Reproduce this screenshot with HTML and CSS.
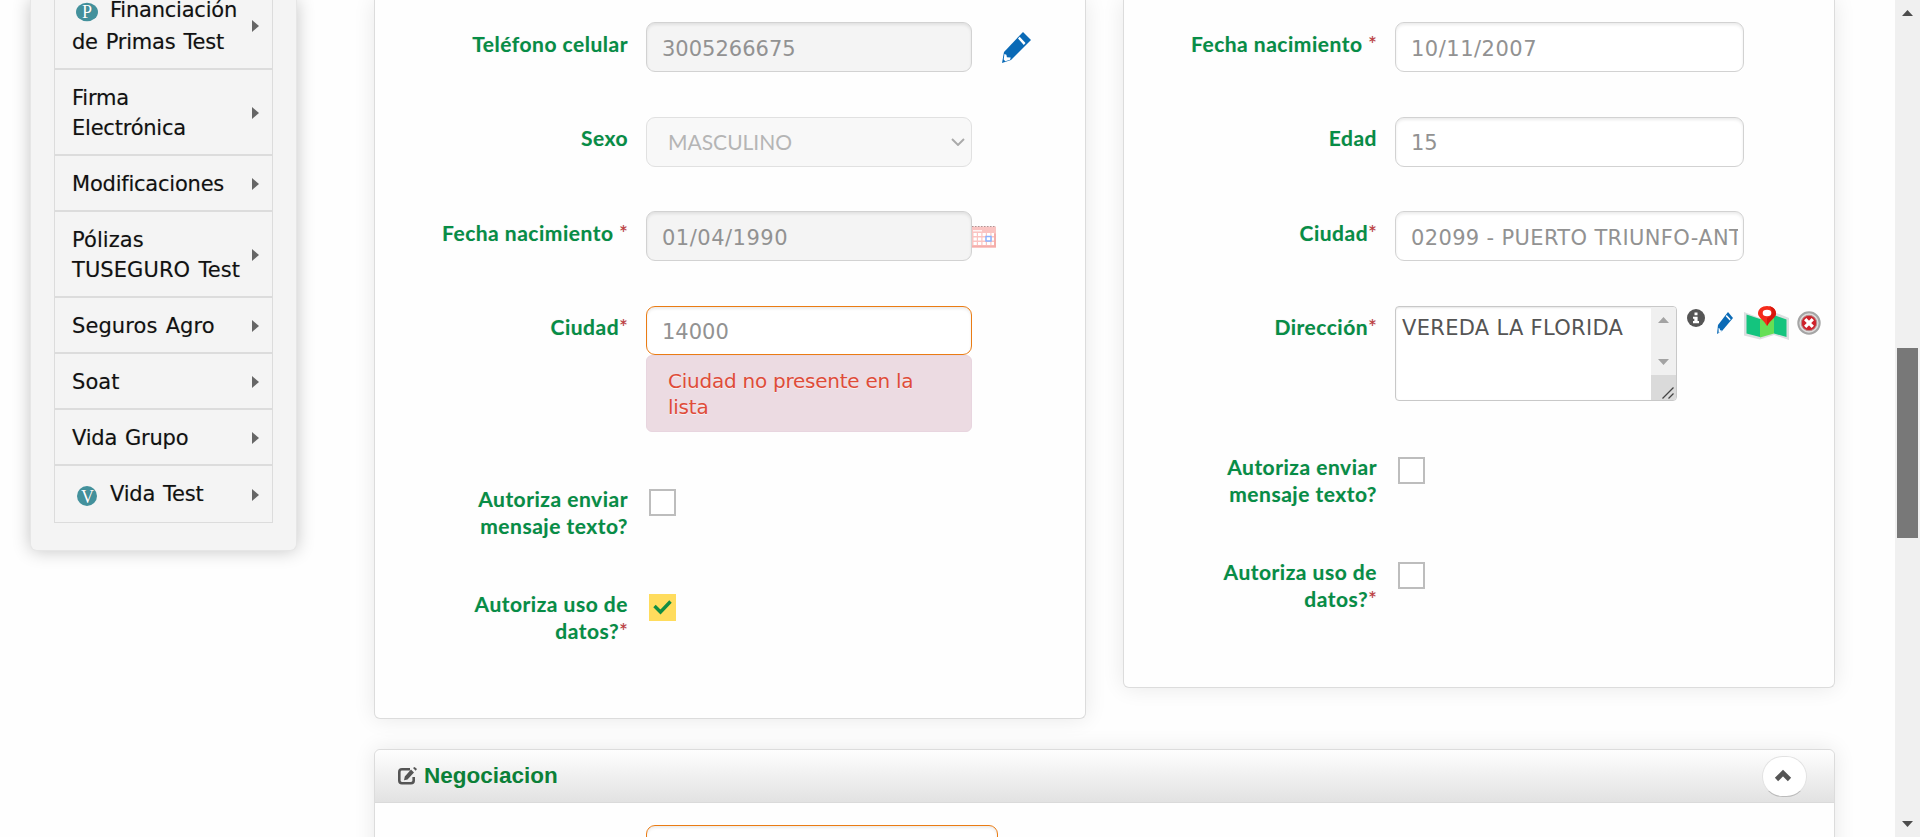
FILE: index.html
```html
<!DOCTYPE html>
<html lang="es">
<head>
<meta charset="utf-8">
<title>Negociacion</title>
<link rel="stylesheet" href="styles.css">
</head>
<body>
<div class="page">
  <nav class="sidebar">
    <ul class="menu">
      <li class="item first"><span><svg class="badge" viewBox="0 0 22 19"><ellipse cx="11" cy="9.5" rx="11" ry="9.3"/><text x="11" y="15.5">P</text></svg>Financiación<br>de Primas Test</span></li>
      <li class="item"><span>Firma<br>Electrónica</span></li>
      <li class="item"><span>Modificaciones</span></li>
      <li class="item loose"><span>Pólizas<br>TUSEGURO Test</span></li>
      <li class="item loose"><span>Seguros Agro</span></li>
      <li class="item loose"><span>Soat</span></li>
      <li class="item"><span>Vida Grupo</span></li>
      <li class="item last"><span><svg class="badge" viewBox="0 0 22 20"><circle cx="11" cy="10" r="10"/><text x="11.5" y="16.5">V</text></svg>Vida Test</span></li>
    </ul>
  </nav>

  <main class="content">
    <div class="columns">
      <section class="panel left">
        <div class="row"><label>Teléfono celular</label><div class="field disabled">3005266675</div>
          <svg class="pencil big" viewBox="0 0 29 31"><path fill="#0a6ab6" d="M21 0 29 8 9 28 0 31 2 20Z"/><path fill="#fff" d="m16 6.500 1.700-1.700 5.800 6.300-1.700 1.800zM2.400 22l2 .7.500 2.500 3.800.3-.6 2.200-4.800 1.500-1.600-1.600z"/></svg></div>
        <div class="row"><label class="raised">Sexo</label><div class="field select">MASCULINO<svg viewBox="0 0 14 8"><path d="M1 1l6 6 6-6"/></svg></div></div>
        <div class="row"><label>Fecha nacimiento <i>*</i></label><div class="field disabled date">01/04/1990</div>
          <svg class="calendar" viewBox="0 0 24 22"><path fill="#fac4c2" d="M0 1h24v21H0z"/><path fill="#f5aeaa" d="M0 20h24v2H0zM22 8h2v14h-2z"/><path stroke="#ad9494" stroke-dasharray="1.500 1.500" d="M0 1h24"/><path fill="#fff" opacity=".8" d="M1 4.500h9v1.500H1z"/><path stroke="#fff" stroke-width="3" stroke-dasharray="3.300 1.200" d="M1.500 9H22M1.500 13.500H22M1.500 18H22"/><path fill="#fff" stroke="#8bb3ff" stroke-width="1.500" d="M14 11h5v4.500h-5z"/></svg></div>
        <div class="row city"><label class="raised">Ciudad<i>*</i></label><div><div class="field invalid">14000</div><div class="error">Ciudad no presente en la lista</div></div></div>
        <div class="row check"><label>Autoriza enviar<br>mensaje texto?</label><span class="box"></span></div>
        <div class="row check"><label>Autoriza uso de<br>datos?<i>*</i></label><span class="box on"><svg viewBox="0 0 27 27"><path d="M5.500 12 11.500 18 21.500 7.500"/></svg></span></div>
      </section>

      <section class="panel right">
        <div class="row"><label>Fecha nacimiento <i>*</i></label><div class="field date">10/11/2007</div></div>
        <div class="row"><label class="raised">Edad</label><div class="field">15</div></div>
        <div class="row"><label>Ciudad<i>*</i></label><div class="field place"><span class="clip">02099 - PUERTO TRIUNFO-ANT</span></div></div>
        <div class="row address"><label class="raised">Dirección<i>*</i></label>
          <div class="textarea"><span>VEREDA LA FLORIDA</span>
            <svg viewBox="0 0 25 93"><path fill="#f0f0f0" d="M0 0h25v68H0z"/><path fill="#dadada" d="M0 68h25v25H0z"/><path fill="#a3a3a3" d="M7 16 12.500 10 18 16zM7 52h11l-5.500 6z"/><path stroke="#444" stroke-width="1.300" d="M11.500 91.500 22.500 80.500M17.500 91.500l5-5"/></svg></div>
          <svg class="info" viewBox="0 0 18 18"><circle cx="9" cy="9" r="9" fill="#555"/><path fill="#fff" d="M7.500 3.500h3v2.800h-3zM6 7.700h4.600V12H12v2.200H6V12h1.300V9.700H6z"/></svg>
          <svg class="pencil small" viewBox="0 0 16 22"><path fill="#0a6ab6" d="M11 0 16 6 5 19 0 22 1 13Z"/><path fill="#fff" d="m8.700 4.200 1-1.300 4 4.300-1 1.300zM1.500 16l1.200.5.400 1.700 1.800.2-.4 1.100-2.800 1.400z"/></svg>
          <svg class="map" viewBox="0 0 45 34"><path fill="#dcdfe0" d="M0 6 16 12 30 6 45 12V34L30 29 16 33.500 0 29.500Z"/><path fill="#14c47e" d="M2.500 8.500 16 13v18L2.500 27.500zM30 9l12.500 4.500V31L30 27.500z"/><path fill="#65df55" d="M16 13 30 9v18.500L16 31.500z"/><path fill="#f52b1b" d="M23 20C20 14 14 11.500 14 7.500 14 3 18 0 23 0s9 3 9 7.500C32 11.500 26 14 23 20Z"/><path fill="#d8170d" d="M25 0c4 .8 7 3.500 7 7.500 0 4-6 6.500-9 12.500v-8c6-1 6-9 2-12z"/><ellipse cx="23" cy="7" rx="4.300" ry="3.300" fill="#fff"/></svg>
          <svg class="remove" viewBox="0 0 24 24"><circle cx="12" cy="12" r="10.700" fill="#dcdcdc" stroke="#a5a5a5" stroke-width="2"/><circle cx="12" cy="12" r="7.700" fill="#cf222b" stroke="#b58d8d"/><path stroke="#fff" stroke-width="3.300" d="m8.200 8.200 7.600 7.600m0-7.600-7.600 7.600"/></svg>
        </div>
        <div class="row check"><label>Autoriza enviar<br>mensaje texto?</label><span class="box"></span></div>
        <div class="row check"><label>Autoriza uso de<br>datos?<i>*</i></label><span class="box"></span></div>
      </section>
    </div>

    <section class="panel deal">
      <header>
        <svg class="edit" viewBox="0 0 19 18"><path fill="none" stroke="#555" stroke-width="2.600" d="M12 2.300H4Q1.300 2.300 1.300 5v8.500q0 2.700 2.700 2.700h9q2.700 0 2.700-2.700V10"/><path fill="#555" d="m13 2.500 3 3-6.500 7L6 13.200l.8-3.700zM15 1l1.500-1L19 2l-1.300 1.800z"/></svg>
        <h2>Negociacion</h2>
        <button><svg viewBox="0 0 18 13"><path d="M2.500 10.500 9 4l6.500 6.500"/></svg></button>
      </header>
      <div class="row"><div class="field invalid wide"></div></div>
    </section>
  </main>

  <div class="scrollbar"><svg viewBox="0 0 11 6"><path d="M0 6 5.500 0 11 6z"/></svg><div class="thumb"></div><svg class="down" viewBox="0 0 11 6"><path d="M0 0h11L5.500 6z"/></svg></div>
</div>
</body>
</html>
```
FILE: styles.css
```css
* { box-sizing: border-box; }
body { margin: 0; background: #fefefe; overflow: hidden; font: 21px/30px "DejaVu Sans", sans-serif; }
svg { display: block; flex: none; }
.page { display: flex; height: 837px; overflow: hidden; }

.sidebar { width: 267px; height: 551px; margin-left: 30px; flex: none; background: #f4f4f4; border: 1px solid #e6e6e6; border-top: 0; border-radius: 0 0 7px 7px; box-shadow: 0 0 18px rgba(0,0,0,.23); padding: 0 22px 0 23px; }
.menu { list-style: none; margin: 0; padding: 0; width: 219px; }
.item { position: relative; display: flex; align-items: center; min-height: 56px; padding: 13px 0 11px 17px; border: 1px solid #dcdcdc; color: #111; letter-spacing: -.22px; word-spacing: 1.5px; white-space: nowrap; text-shadow: 0 0 1px rgba(0,0,0,.25); }
.item::after { content: ""; position: absolute; right: 13px; top: 50%; margin-top: -5px; border: 6px solid transparent; border-left: 7px solid #666; border-right: 0; }
.loose { letter-spacing: .08px; }
.first { height: 69px; padding: 0 0 10px 17px; border-top: 0; line-height: 32px; align-items: flex-end; }
.first::after { top: 25px; margin-top: -5px; }
.last { height: 58px; padding: 12px 0 12px 17px; }
.badge { display: inline-block; width: 22px; height: 20px; margin: 0 12px 0 4px; vertical-align: -5px; fill: #43919c; }
.badge text { font: 18px "Liberation Serif", serif; fill: #fff; text-anchor: middle; }

.content { width: 1461px; margin-left: 77px; flex: none; }
.columns { display: flex; justify-content: space-between; align-items: flex-start; height: 749px; }
.panel { background: #fefefe; border: 1px solid #dcdcdc; border-radius: 6px; box-shadow: 0 0 22px rgba(0,0,0,.09); }
.left, .right { width: 712px; padding-top: 22px; border-top: 0; border-radius: 0 0 6px 6px; }
.left { height: 719px; }
.right { height: 688px; }
.row { display: flex; align-items: flex-start; height: 94.500px; }
label { flex: none; width: 253px; margin-right: 18px; padding-top: 8px; text-align: right; font: bold 21px/27px Lato, sans-serif; letter-spacing: .5px; color: #068d46; text-shadow: 0 0 1px rgba(0,0,0,.2); }
.raised { padding-top: 7px; }
label i { font-style: normal; font-weight: normal; color: #c03a3d; letter-spacing: 0; }
.field { display: flex; align-items: center; width: 326px; height: 50px; padding: 3px 5px 0 15px; border: 1px solid #d2d2d2; border-radius: 9px; background: #fff; box-shadow: inset 0 2px 3px rgba(0,0,0,.08); color: #929292; white-space: nowrap; }
.right .field { width: 349px; }
.date { letter-spacing: .5px; }
.place { letter-spacing: .35px; }
.clip { overflow: hidden; }
.disabled { background: #f4f4f4; }
.select { position: relative; padding: 1px 5px 0 21px; background: #f8f8f8; border-color: #e1e1e1; box-shadow: none; color: #b5b5b5; font-family: Lato, sans-serif; }
.select svg { position: absolute; right: 6px; top: 20px; width: 14px; fill: none; stroke: #aaa; stroke-width: 1.900; }
.invalid { border-color: #ea7c14; }
.big { width: 29px; height: 31px; margin: 10px 0 0 30px; }
.calendar { width: 24px; height: 23px; margin-top: 14px; }
.city { height: 171.500px; }
.city .field { height: 49px; }
.error { width: 326px; height: 77px; padding: 12px 20px 0 21px; background: #ecdbe2; border: 1px solid #e8d5df; border-radius: 6px; color: #df4c39; font-size: 20px; letter-spacing: -.25px; line-height: 26px; text-shadow: 0 1px 0 rgba(255,255,255,.6); }
.address { height: 139.500px; }
.check { height: 105px; }
.box { width: 27px; height: 27px; margin: 11.500px 0 0 3px; border: 2px solid #bdbdbd; background: #fff; }
.on { border: 0; background: #ffdc5d; }
.on svg { fill: none; stroke: #118d43; stroke-width: 3.400; }

.textarea { display: flex; justify-content: space-between; width: 282px; height: 95px; border: 1px solid #c8c8c8; border-radius: 4px; color: #555; background: #fff; overflow: hidden; box-shadow: inset 0 1px 2px rgba(0,0,0,.1); letter-spacing: .3px; }
.textarea span { padding: 6px 0 0 6px; }
.textarea svg { width: 25px; height: 93px; }
.info { width: 18px; height: 18px; margin: 3px 0 0 10px; }
.small { width: 16px; height: 22px; margin: 6px 0 0 12px; }
.map { width: 45px; height: 34px; margin: 0 0 0 11px; }
.remove { width: 24px; height: 24px; margin: 5px 0 0 8px; }

.deal { height: 110px; }
.deal header { display: flex; align-items: center; height: 53px; padding: 0 27px 0 23px; border-bottom: 1px solid #dadada; border-radius: 6px 6px 0 0; background: linear-gradient(#fefefe, #e2e2e2); }
.edit { width: 19px; height: 18px; }
.deal h2 { flex: 1; margin: 0 0 0 7px; font: bold 22.500px/30px "Liberation Sans", sans-serif; color: #0b8038; }
.deal button { display: flex; align-items: center; justify-content: center; width: 45px; height: 41px; padding: 0 3px 2px 0; border: 1px solid #e2e2e2; border-bottom-color: #bbb; border-radius: 21px; background: #fff; }
.deal button svg { width: 18px; height: 13px; fill: none; stroke: #555; stroke-width: 4.600; }
.deal .row { padding: 22px 0 0 271px; }
.wide { width: 352px; }

.scrollbar { position: relative; display: flex; flex-direction: column; align-items: center; width: 25px; margin-left: auto; padding: 10px 0; background: #f0f0f0; }
.scrollbar > svg { width: 11px; height: 6px; fill: #4d4d4d; }
.thumb { width: 21px; height: 190px; margin-top: 332px; background: #787878; }
.scrollbar .down { margin-top: auto; }
```
